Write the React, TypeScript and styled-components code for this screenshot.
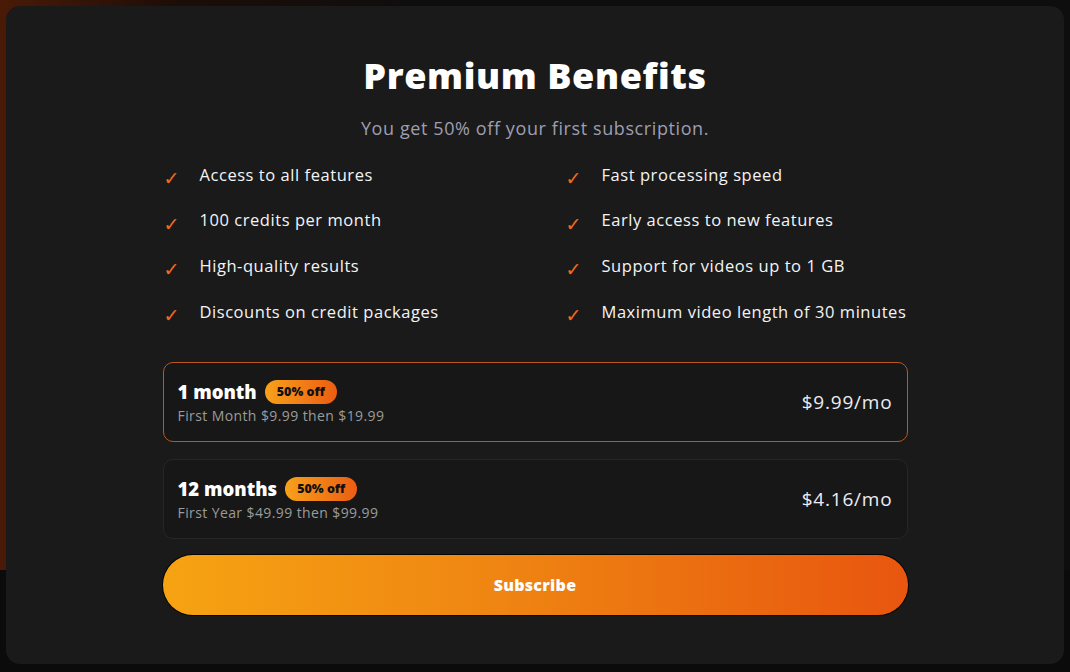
import styled, { createGlobalStyle } from "styled-components";

const Global = createGlobalStyle`
  html, body {
    margin: 0;
    padding: 0;
    background: #0c0c0c;
  }
  body {
    font-family: "Open Sans", "Liberation Sans", sans-serif;
  }
  * { box-sizing: border-box; }
`;

const Backdrop = styled.div`
  width: 1070px;
  height: 672px;
  padding: 6px 6px 8px 6px;
  background:
    linear-gradient(to bottom, transparent 570px, #0b0b0b 570px),
    linear-gradient(90deg, #4a1a07 0px, #1c0d07 180px, #0e0e0e 420px);
`;

const Modal = styled.div`
  height: 100%;
  background: #1a1a1a;
  border-radius: 14px;
  display: flex;
  flex-direction: column;
  align-items: center;
  padding-top: 46px;
`;

const Content = styled.div`
  width: 745px;
  display: flex;
  flex-direction: column;
`;

const Title = styled.h1`
  margin: 0;
  text-align: center;
  color: #ffffff;
  font-size: 36px;
  font-weight: 800;
  line-height: 48px;
  letter-spacing: 0.6px;
`;

const Subtitle = styled.p`
  margin: 16px 0 0;
  text-align: center;
  color: #9e9eb2;
  font-size: 18px;
  line-height: 24px;
  letter-spacing: 0.6px;
`;

const Features = styled.ul`
  list-style: none;
  margin: 12px 0 0;
  padding: 0;
  display: grid;
  grid-template-columns: 402px 1fr;
  grid-auto-rows: 45.6px;
`;

const Feature = styled.li`
  display: flex;
  align-items: center;
  color: #f4f4f6;
  font-size: 16.5px;
  line-height: 24px;
  letter-spacing: 0.55px;
`;

const Check = styled.span`
  width: 37px;
  padding-left: 1px;
  padding-top: 8px;
  color: #f26a1f;
  font-family: "DejaVu Sans", sans-serif;
  font-size: 19px;
  line-height: 1;
`;

const Plans = styled.div`
  margin-top: 28px;
  display: flex;
  flex-direction: column;
  gap: 17px;
`;

const Plan = styled.div<{ $active?: boolean }>`
  height: 80px;
  border-radius: 10px;
  border: 1px solid ${(p) => (p.$active ? "#b8581f" : "#262626")};
  background: #171717;
  display: flex;
  align-items: center;
  justify-content: space-between;
  padding: 0 14px 0 14px;
`;

const PlanInfo = styled.div`
  display: flex;
  flex-direction: column;
  gap: 1px;
`;

const PlanHead = styled.div`
  display: flex;
  align-items: center;
  gap: 8px;
`;

const PlanName = styled.span`
  color: #ffffff;
  font-size: 18.5px;
  font-weight: 800;
  line-height: 26px;
`;

const Badge = styled.span`
  height: 24px;
  padding: 0 12px;
  border-radius: 12px;
  background: linear-gradient(90deg, #f7a11b, #ec5d12);
  color: #111111;
  font-size: 12.5px;
  font-weight: 800;
  display: inline-flex;
  align-items: center;
`;

const PlanNote = styled.span`
  color: #9b9b9b;
  font-size: 14px;
  line-height: 20px;
  letter-spacing: 0.4px;
`;

const Price = styled.span`
  color: #ececf2;
  font-size: 19px;
  line-height: 26px;
  letter-spacing: 0.8px;
`;

const Subscribe = styled.button`
  margin-top: 16px;
  height: 60px;
  width: 100%;
  border-radius: 30px;
  border: none;
  box-shadow: 0 0 0 1px #050505;
  background: linear-gradient(90deg, #f6a312 0%, #ef8512 45%, #e8560f 100%);
  color: #ffffff;
  font-family: inherit;
  font-size: 16px;
  font-weight: 800;
  letter-spacing: 0.3px;
  cursor: pointer;
`;

const features = [
  "Access to all features",
  "Fast processing speed",
  "100 credits per month",
  "Early access to new features",
  "High-quality results",
  "Support for videos up to 1 GB",
  "Discounts on credit packages",
  "Maximum video length of 30 minutes",
];

const plans = [
  { name: "1 month", note: "First Month $9.99 then $19.99", price: "$9.99/mo", active: true },
  { name: "12 months", note: "First Year $49.99 then $99.99", price: "$4.16/mo", active: false },
];

export default function App() {
  return (
    <Backdrop>
      <Global />
      <Modal>
        <Content>
          <Title>Premium Benefits</Title>
          <Subtitle>You get 50% off your first subscription.</Subtitle>
          <Features>
            {features.map((f) => (
              <Feature key={f}>
                <Check>✓</Check>
                {f}
              </Feature>
            ))}
          </Features>
          <Plans>
            {plans.map((p) => (
              <Plan key={p.name} $active={p.active}>
                <PlanInfo>
                  <PlanHead>
                    <PlanName>{p.name}</PlanName>
                    <Badge>50% off</Badge>
                  </PlanHead>
                  <PlanNote>{p.note}</PlanNote>
                </PlanInfo>
                <Price>{p.price}</Price>
              </Plan>
            ))}
          </Plans>
          <Subscribe>Subscribe</Subscribe>
        </Content>
      </Modal>
    </Backdrop>
  );
}
